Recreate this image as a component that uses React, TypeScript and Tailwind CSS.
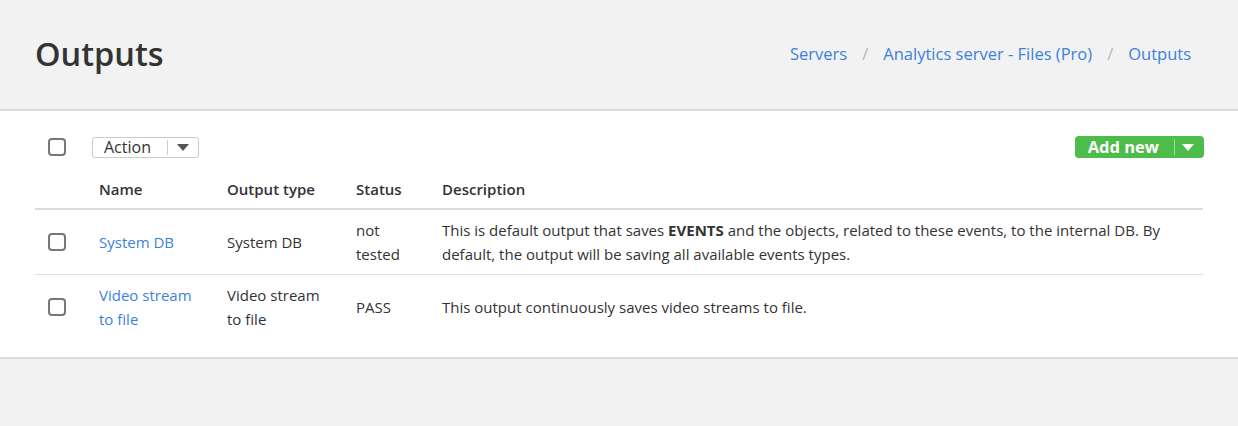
import React from 'react';

type Output = {
  id: number;
  name: string;
  type: string;
  status: string;
  description: React.ReactNode;
};

const outputs: Output[] = [
  {
    id: 1,
    name: 'System DB',
    type: 'System DB',
    status: 'not tested',
    description: (
      <>
        This is default output that saves <b className="font-bold">EVENTS</b> and the objects, related to these events, to
        the internal DB. By default, the output will be saving all available events types.
      </>
    ),
  },
  {
    id: 2,
    name: 'Video stream to file',
    type: 'Video stream to file',
    status: 'PASS',
    description: 'This output continuously saves video streams to file.',
  },
];

const Checkbox: React.FC = () => (
  <span className="block w-[18px] h-[18px] rounded-[4px] border-2 border-[#777]" />
);

const Caret: React.FC<{ className: string }> = ({ className }) => (
  <svg width="12" height="7" viewBox="0 0 12 7" className={className}>
    <path d="M0 0h12L6 7z" fill="currentColor" />
  </svg>
);

const cols = 'grid grid-cols-[51px_128px_129px_86px_1fr]';

const App: React.FC = () => {
  return (
    <div className="min-h-screen bg-[#f2f2f2] text-[#333] font-['Open_Sans',sans-serif]">
      {/* Page header */}
      <header className="h-[111px] flex items-center justify-between px-[35px] border-b-2 border-[#dcdcdc]">
        <h1 className="text-[32.5px] font-semibold text-[#333] leading-none">Outputs</h1>
        <nav className="flex items-center gap-[15px] text-[16.5px] text-[#3d7fe0] pr-[12px]">
          <a>Servers</a>
          <span className="text-[#b5b5b5]">/</span>
          <a>Analytics server - Files (Pro)</a>
          <span className="text-[#b5b5b5]">/</span>
          <a>Outputs</a>
        </nav>
      </header>

      {/* Outputs table */}
      <section className="bg-white border-b-2 border-[#dcdcdc] px-[35px] pt-[25px] pb-[18px]">
        <div className="flex items-center justify-between h-[22px]">
          <div className="flex items-center">
            <span className="pl-[13px] w-[57px]">
              <Checkbox />
            </span>
            <button className="flex items-center h-[21px] border border-[#ccc] rounded-[3px] text-[16px] leading-none text-[#333]">
              <span className="pl-[11px] pr-[16px]">Action</span>
              <span className="h-[15px] border-l border-[#ccc]" />
              <span className="px-[9px]">
                <Caret className="text-[#555]" />
              </span>
            </button>
          </div>
          <button className="flex items-center h-[22px] mr-[-1px] bg-[#4cbc4a] rounded-[4px] text-white font-bold text-[16.5px] leading-none">
            <span className="pl-[13px] pr-[15px]">Add new</span>
            <span className="h-[16px] border-l border-[#9fdc9e]" />
            <span className="pl-[7px] pr-[10px]">
              <Caret className="text-white" />
            </span>
          </button>
        </div>

        <div className="mt-[16px] text-[15px] leading-6">
          <div className={`${cols} h-[36px] items-end pb-[7px] border-b-2 border-[#dcdcdc] font-semibold`}>
            <span />
            <span className="px-[13px]">Name</span>
            <span className="px-[13px]">Output type</span>
            <span className="px-[13px]">Status</span>
            <span className="px-[13px]">Description</span>
          </div>
          {outputs.map((o, i) => (
            <div
              key={o.id}
              className={`${cols} items-center py-2 min-h-[64px] ${i < outputs.length - 1 ? 'border-b border-[#dedede]' : ''}`}
            >
              <span className="pl-[13px]">
                <Checkbox />
              </span>
              <a className="px-[13px] text-[#3d7fe0]">{o.name}</a>
              <span className="px-[13px]">{o.type}</span>
              <span className="px-[13px]">{o.status}</span>
              <span className="px-[13px]">{o.description}</span>
            </div>
          ))}
        </div>
      </section>
    </div>
  );
};

export default App;
